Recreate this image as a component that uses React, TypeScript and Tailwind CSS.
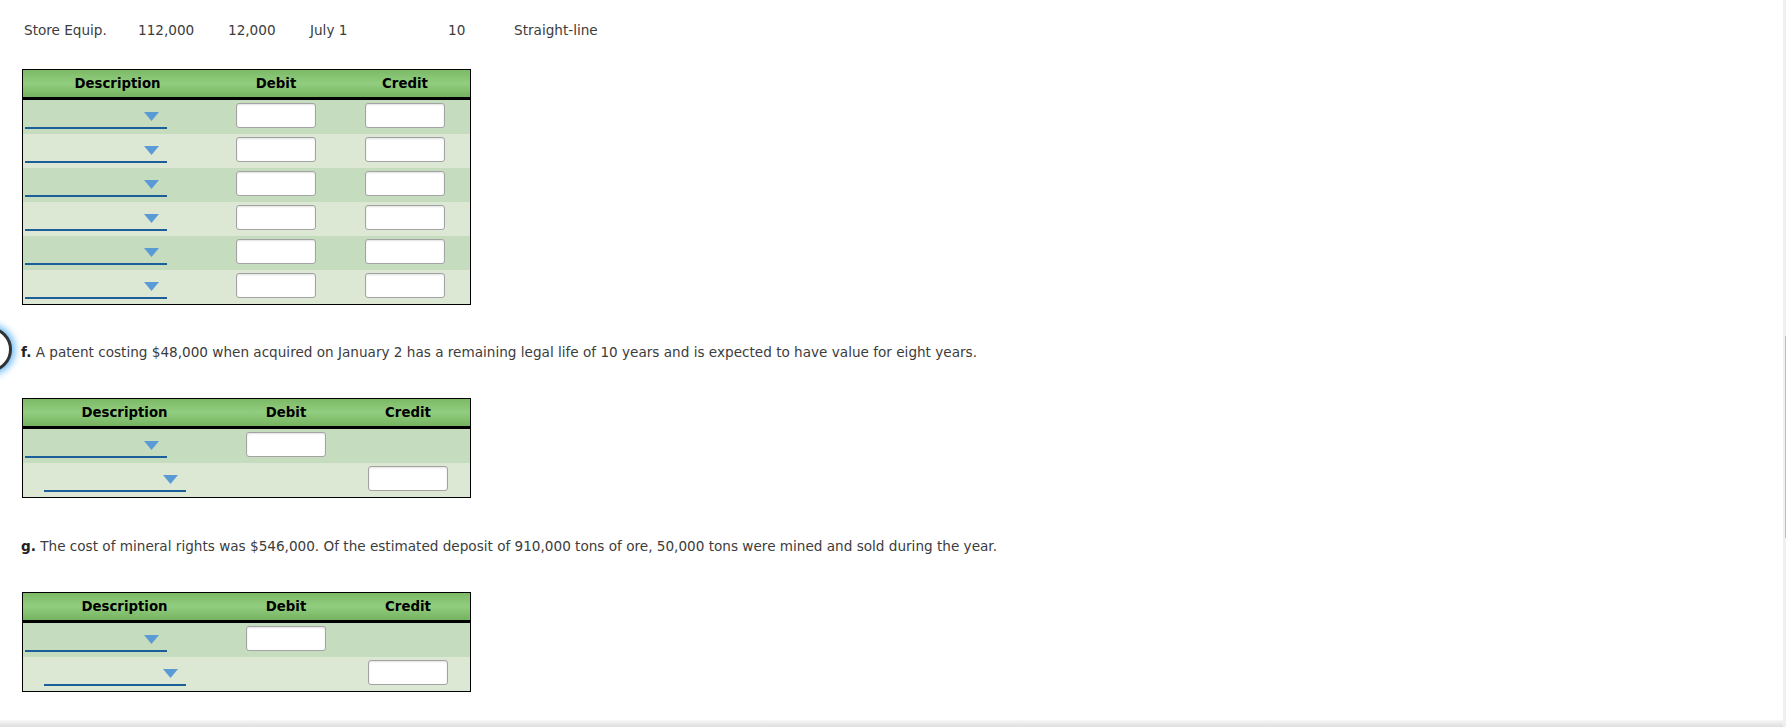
import React from 'react';

type Row = { debit: boolean; credit: boolean; indent?: boolean };

const FONT = { fontFamily: '"DejaVu Sans", Verdana, sans-serif' };

const Caret: React.FC = () => (
  <svg width="15" height="9" viewBox="0 0 15 9" className="block">
    <path d="M0 0 H15 L7.5 9 Z" fill="#5b9bd5" />
  </svg>
);

const Dropdown: React.FC<{ indent?: boolean }> = ({ indent }) => (
  <div
    className={`w-[142px] h-[29px] border-b-2 border-[#1b5e98] flex justify-end items-start pt-[12px] pr-[8px] ${
      indent ? 'ml-[21px]' : 'ml-[2px]'
    }`}
  >
    <Caret />
  </div>
);

const Amount: React.FC = () => (
  <div className="w-[80px] h-[25px] mt-[3px] bg-white border border-[#a3a3a3] rounded-[3px] shadow-[inset_0_1px_2px_rgba(0,0,0,0.12)]" />
);

const JournalTable: React.FC<{ rows: Row[]; cols: string }> = ({ rows, cols }) => (
  <div className="w-[449px] border border-black">
    <div
      className={`grid ${cols} h-[30px] border-b-[3px] border-black bg-gradient-to-b from-[#7cba67] via-[#92cd7f] to-[#74b35f] text-[13.3px] font-bold text-black leading-[27px]`}
    >
      <div className="text-center">Description</div>
      <div className="text-center">Debit</div>
      <div className="text-center">Credit</div>
    </div>
    {rows.map((r, i) => (
      <div
        key={i}
        className={`grid ${cols} h-[34px] ${i % 2 === 0 ? 'bg-[#c6dcbf]' : 'bg-[#dde8d4]'}`}
      >
        <div>
          <Dropdown indent={r.indent} />
        </div>
        <div className="flex justify-center">{r.debit && <Amount />}</div>
        <div className="flex justify-center">{r.credit && <Amount />}</div>
      </div>
    ))}
  </div>
);

const sixRows: Row[] = Array.from({ length: 6 }, () => ({ debit: true, credit: true }));
const twoRows: Row[] = [
  { debit: true, credit: false },
  { debit: false, credit: true, indent: true },
];

const App: React.FC = () => {
  return (
    <div className="flex w-[1786px] h-[727px] overflow-hidden bg-white text-[#3c3c3c]" style={FONT}>
      <div className="relative flex-1 flex flex-col">
        <div className="flex-1 pl-[22px]">
          {/* asset row */}
          <div className="flex pt-[21px] h-[40px] leading-[18px] text-[13.6px] pl-[2px]">
            <span className="w-[114px]">Store Equip.</span>
            <span className="w-[90px]">112,000</span>
            <span className="w-[82px]">12,000</span>
            <span className="w-[138px]">July 1</span>
            <span className="w-[66px]">10</span>
            <span>Straight-line</span>
          </div>

          <div className="mt-[29px]">
            <JournalTable rows={sixRows} cols="grid-cols-[189px_128px_1fr]" />
          </div>

          <p className="mt-[38px] -ml-[1px] text-[13.6px] leading-[18px]">
            <b className="text-[#222]">f.</b> A patent costing $48,000 when acquired on January 2 has a remaining legal life of 10 years and is expected to have value for eight years.
          </p>

          <div className="mt-[37px]">
            <JournalTable rows={twoRows} cols="grid-cols-[203px_120px_1fr]" />
          </div>

          <p className="mt-[39px] -ml-[1px] text-[13.6px] leading-[18px]">
            <b className="text-[#222]">g.</b> The cost of mineral rights was $546,000. Of the estimated deposit of 910,000 tons of ore, 50,000 tons were mined and sold during the year.
          </p>

          <div className="mt-[37px]">
            <JournalTable rows={twoRows} cols="grid-cols-[203px_120px_1fr]" />
          </div>
        </div>

        <div className="h-[7px] bg-gradient-to-b from-[#f7f7f7] to-[#dedede]" />

        {/* focus ring marker on the left edge */}
        <div className="absolute left-[-33px] top-[327px] w-[45px] h-[45px] rounded-full border-[3px] border-[#333] bg-white shadow-[0_0_7px_3px_rgba(70,170,245,0.8)]" />
      </div>

      {/* scrollbar */}
      <div className="w-[3px] h-full bg-[#f0f0f0]">
        <div className="mt-[336px] h-[202px] ml-[2px] w-[1px] bg-[#bdbdbd]" />
      </div>
    </div>
  );
};

export default App;
